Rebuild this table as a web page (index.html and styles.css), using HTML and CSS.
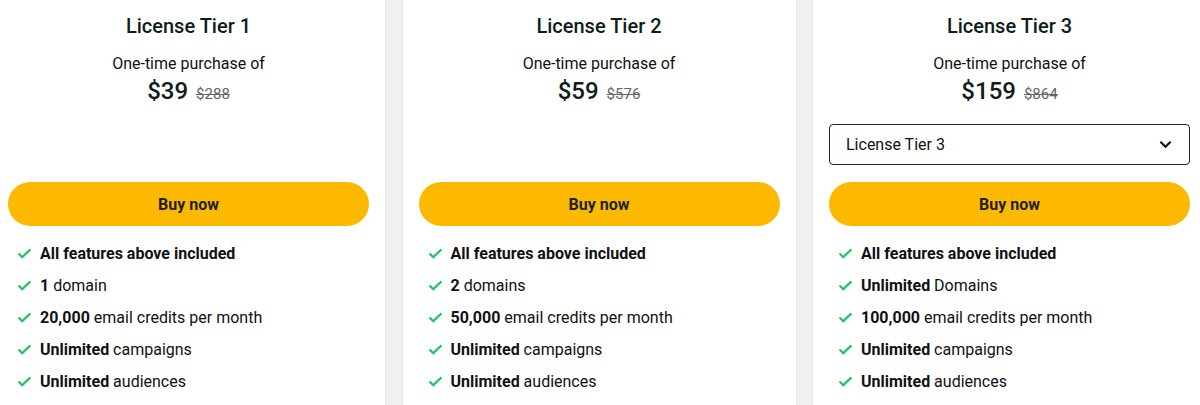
FILE: index.html
```html
<!DOCTYPE html>
<html lang="en">
<head>
<meta charset="utf-8">
<title>License Tiers</title>
<link rel="stylesheet" href="styles.css">
</head>
<body>
<div class="tiers">
  <section class="card">
    <h2 class="title">License Tier 1</h2>
    <p class="sub">One-time purchase of</p>
    <div class="price"><span class="now">$39</span><s class="was">$288</s></div>
    <div class="select-spacer"></div>
    <button class="buy">Buy now</button>
    <ul class="features">
      <li><svg class="check" viewBox="0 0 16 12"><polyline points="1.5,6 5.5,10 14.5,1.5"/></svg><span><b>All features above included</b></span></li>
      <li><svg class="check" viewBox="0 0 16 12"><polyline points="1.5,6 5.5,10 14.5,1.5"/></svg><span><b>1</b> domain</span></li>
      <li><svg class="check" viewBox="0 0 16 12"><polyline points="1.5,6 5.5,10 14.5,1.5"/></svg><span><b>20,000</b> email credits per month</span></li>
      <li><svg class="check" viewBox="0 0 16 12"><polyline points="1.5,6 5.5,10 14.5,1.5"/></svg><span><b>Unlimited</b> campaigns</span></li>
      <li><svg class="check" viewBox="0 0 16 12"><polyline points="1.5,6 5.5,10 14.5,1.5"/></svg><span><b>Unlimited</b> audiences</span></li>
    </ul>
  </section>
  <section class="card">
    <h2 class="title">License Tier 2</h2>
    <p class="sub">One-time purchase of</p>
    <div class="price"><span class="now">$59</span><s class="was">$576</s></div>
    <div class="select-spacer"></div>
    <button class="buy">Buy now</button>
    <ul class="features">
      <li><svg class="check" viewBox="0 0 16 12"><polyline points="1.5,6 5.5,10 14.5,1.5"/></svg><span><b>All features above included</b></span></li>
      <li><svg class="check" viewBox="0 0 16 12"><polyline points="1.5,6 5.5,10 14.5,1.5"/></svg><span><b>2</b> domains</span></li>
      <li><svg class="check" viewBox="0 0 16 12"><polyline points="1.5,6 5.5,10 14.5,1.5"/></svg><span><b>50,000</b> email credits per month</span></li>
      <li><svg class="check" viewBox="0 0 16 12"><polyline points="1.5,6 5.5,10 14.5,1.5"/></svg><span><b>Unlimited</b> campaigns</span></li>
      <li><svg class="check" viewBox="0 0 16 12"><polyline points="1.5,6 5.5,10 14.5,1.5"/></svg><span><b>Unlimited</b> audiences</span></li>
    </ul>
  </section>
  <section class="card">
    <h2 class="title">License Tier 3</h2>
    <p class="sub">One-time purchase of</p>
    <div class="price"><span class="now">$159</span><s class="was">$864</s></div>
    <div class="select">
      <span>License Tier 3</span>
      <svg class="chev" viewBox="0 0 14 9"><polyline points="1.5,1.5 7,7 12.5,1.5"/></svg>
    </div>
    <button class="buy">Buy now</button>
    <ul class="features">
      <li><svg class="check" viewBox="0 0 16 12"><polyline points="1.5,6 5.5,10 14.5,1.5"/></svg><span><b>All features above included</b></span></li>
      <li><svg class="check" viewBox="0 0 16 12"><polyline points="1.5,6 5.5,10 14.5,1.5"/></svg><span><b>Unlimited</b> Domains</span></li>
      <li><svg class="check" viewBox="0 0 16 12"><polyline points="1.5,6 5.5,10 14.5,1.5"/></svg><span><b>100,000</b> email credits per month</span></li>
      <li><svg class="check" viewBox="0 0 16 12"><polyline points="1.5,6 5.5,10 14.5,1.5"/></svg><span><b>Unlimited</b> campaigns</span></li>
      <li><svg class="check" viewBox="0 0 16 12"><polyline points="1.5,6 5.5,10 14.5,1.5"/></svg><span><b>Unlimited</b> audiences</span></li>
    </ul>
  </section>
</div>
</body>
</html>
```

FILE: styles.css
```css
html, body {
  margin: 0;
  padding: 0;
  background: #ffffff;
  overflow: hidden;
}
body {
  font-family: Roboto, "Liberation Sans", Arial, sans-serif;
  color: #111;
}
.tiers {
  display: grid;
  grid-template-columns: repeat(3, 393px);
  column-gap: 17.5px;
  margin-left: -8px;
  background: #f0f0f0;
  height: 405px;
}
.card {
  background: #fff;
  padding: 14px 16px 0;
  box-shadow: 0 0 0 1px #e6e6e6;
  display: flex;
  flex-direction: column;
}
.title {
  margin: 0;
  font-size: 20px;
  font-weight: 500;
  line-height: 24px;
  text-align: center;
  color: #0f1c1c;
}
.sub {
  margin: 14px 0 0;
  font-size: 16px;
  line-height: 24px;
  text-align: center;
  color: #111;
}
.price {
  display: flex;
  justify-content: center;
  align-items: baseline;
  gap: 8px;
  height: 30px;
  line-height: 30px;
  overflow: visible;
}
.now {
  font-size: 24px;
  font-weight: 500;
  color: #0f1c1c;
}
.was {
  font-size: 15px;
  color: #666;
}
.select-spacer {
  height: 41px;
  margin-top: 18px;
  flex: none;
}
.select {
  margin-top: 18px;
  height: 41px;
  flex: none;
  box-sizing: border-box;
  border: 1px solid #222;
  border-radius: 4px;
  display: flex;
  align-items: center;
  justify-content: space-between;
  padding: 0 17px 0 16px;
  font-size: 16px;
  color: #111;
}
.chev {
  width: 13px;
  height: 9px;
  fill: none;
  stroke: #111;
  stroke-width: 2.2;
}
.buy {
  margin-top: 17px;
  height: 44px;
  flex: none;
  border: none;
  border-radius: 22px;
  background: #fcb900;
  font-family: inherit;
  font-size: 16px;
  font-weight: 700;
  color: #1e1e1e;
  width: 100%;
}
.features {
  list-style: none;
  margin: 11px 0 0;
  padding: 0 0 0 9px;
}
.features li {
  display: flex;
  align-items: center;
  height: 32px;
  font-size: 16px;
  color: #111;
}
.features b {
  font-weight: 700;
}
.check {
  width: 15px;
  height: 11px;
  margin-right: 8px;
  fill: none;
  stroke: #22c55e;
  stroke-width: 2.4;
  flex: none;
}
```
